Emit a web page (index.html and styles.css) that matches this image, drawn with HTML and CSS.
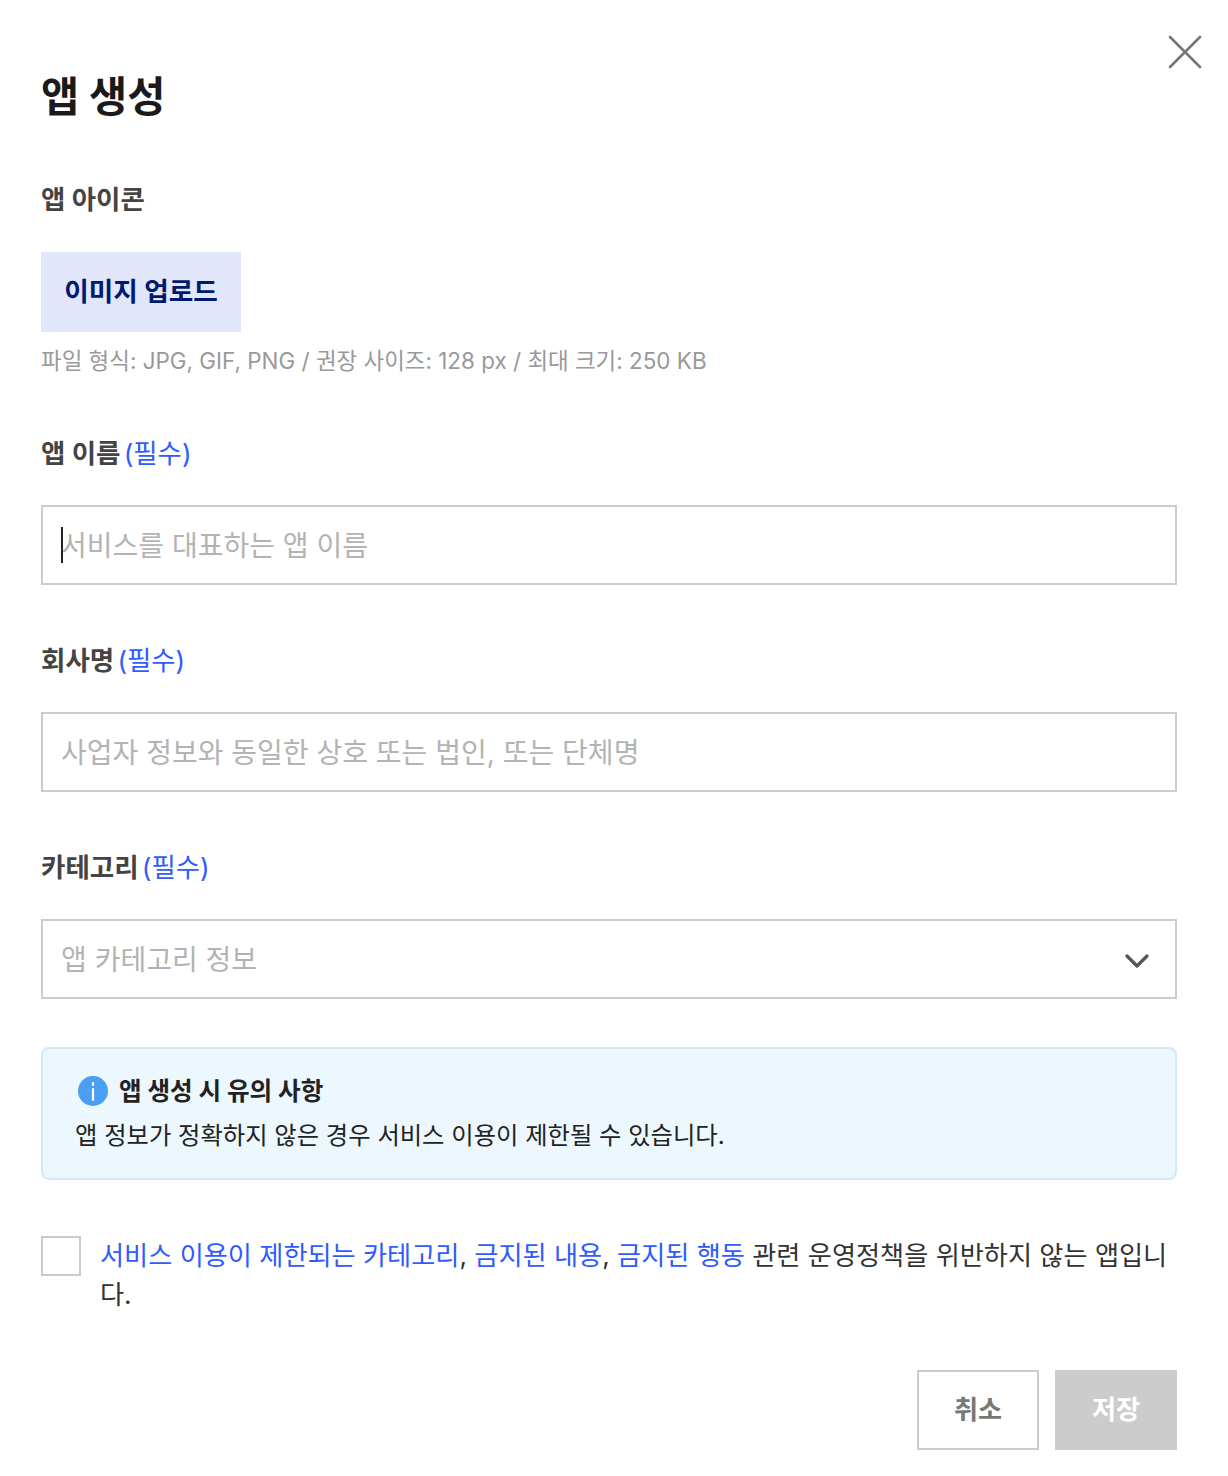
FILE: index.html
```html
<!DOCTYPE html>
<html lang="ko">
<head>
    <meta charset="UTF-8">
    <title>앱 생성</title>
    <link rel="stylesheet" href="styles.css">
</head>
<body>
    <div class="modal">
        <button type="button" class="close-btn" aria-label="닫기">
            <svg width="36" height="36" viewBox="0 0 36 36"><path d="M3 3L33 33M33 3L3 33" stroke="#777" stroke-width="2.6" stroke-linecap="round"/></svg>
        </button>
        <h1>앱 생성</h1>

        <div class="label icon-label">앱 아이콘</div>
        <button type="button" class="upload-btn">이미지 업로드</button>
        <p class="hint">파일 형식: JPG, GIF, PNG / 권장 사이즈: 128 px / 최대 크기: 250 KB</p>

        <div class="form-group">
            <label class="label">앱 이름 <span class="req">(필수)</span></label>
            <div class="field"><span class="caret"></span>서비스를 대표하는 앱 이름</div>
        </div>
        <div class="form-group">
            <label class="label">회사명 <span class="req">(필수)</span></label>
            <div class="field">사업자 정보와 동일한 상호 또는 법인, 또는 단체명</div>
        </div>
        <div class="form-group">
            <label class="label">카테고리 <span class="req">(필수)</span></label>
            <div class="field select">
                앱 카테고리 정보
                <svg width="24" height="14" viewBox="0 0 24 14"><path d="M2 2L12 12L22 2" fill="none" stroke="#555" stroke-width="3.2" stroke-linecap="round" stroke-linejoin="round"/></svg>
            </div>
        </div>

        <div class="notice">
            <div class="notice-title">
                <svg width="30" height="30" viewBox="0 0 30 30"><circle cx="15" cy="15" r="15" fill="#4a9ff5"/><path d="M15 13V24M15 7V9" stroke="#fff" stroke-width="2.2" stroke-linecap="round"/></svg>
                앱 생성 시 유의 사항
            </div>
            <p>앱 정보가 정확하지 않은 경우 서비스 이용이 제한될 수 있습니다.</p>
        </div>

        <div class="agree">
            <span class="checkbox"></span>
            <p><a href="#">서비스 이용이 제한되는 카테고리</a>, <a href="#">금지된 내용</a>, <a href="#">금지된 행동</a> 관련 운영정책을 위반하지 않는 앱입니다.</p>
        </div>

        <div class="actions">
            <button type="button" class="cancel-btn">취소</button>
            <button type="button" class="save-btn">저장</button>
        </div>
    </div>
</body>
</html>
```

FILE: styles.css
```css
* {
    box-sizing: border-box;
}
body {
    margin: 0;
    background: #fff;
    font-family: Inter, "Noto Sans CJK KR", sans-serif;
    color: #222;
}
button {
    font-family: inherit;
    cursor: pointer;
}
.modal {
    position: relative;
    width: 1228px;
    height: 1476px;
    padding: 68px 51px 0 41px;
}
.close-btn {
    position: absolute;
    top: 34px;
    right: 25px;
    padding: 0;
    border: none;
    background: none;
    line-height: 0;
}
h1 {
    margin: 0;
    font-size: 41.5px;
    line-height: 58px;
    font-weight: 700;
    color: #1a1a1a;
}
.label {
    display: block;
    height: 38px;
    font-size: 26.5px;
    line-height: 38px;
    font-weight: 700;
    color: #444;
}
.icon-label {
    margin-top: 54px;
}
.req {
    margin-left: -3px;
    font-size: 26.4px;
    font-weight: 400;
    color: #2f5bff;
}
.upload-btn {
    display: block;
    width: 200px;
    height: 80px;
    margin-top: 34px;
    padding: 0 0 6px;
    border: none;
    background: #e1e6fb;
    color: #001a6e;
    font-size: 26.7px;
    font-weight: 700;
}
.hint {
    margin: 11px 0 0;
    font-size: 22.45px;
    line-height: 35px;
    color: #999;
}
.form-group {
    margin-top: 56px;
}
.field {
    display: flex;
    align-items: center;
    justify-content: space-between;
    position: relative;
    height: 80px;
    margin-top: 33px;
    padding: 0 26px 2px 18px;
    border: 2px solid #ccc;
    font-size: 28px;
    color: #b3b3b3;
}
.caret {
    position: absolute;
    left: 18px;
    top: 20px;
    width: 2px;
    height: 36px;
    background: #222;
}
.select svg {
    margin-top: 6px;
}
.notice {
    height: 133px;
    margin-top: 48px;
    padding: 24px 32px;
    border: 2px solid #d3e8fb;
    border-radius: 8px;
    background: #ecf7fe;
}
.notice-title {
    display: flex;
    align-items: center;
    gap: 11px;
    padding-left: 3px;
    font-size: 24.6px;
    line-height: 36px;
    font-weight: 700;
}
.notice p {
    margin: 7px 0 0;
    font-size: 24.3px;
    line-height: 38px;
}
.agree {
    display: flex;
    gap: 19px;
    margin-top: 56px;
}
.checkbox {
    flex: none;
    width: 40px;
    height: 40px;
    border: 2px solid #ccc;
}
.agree p {
    margin: 0;
    font-size: 26.2px;
    line-height: 39px;
    color: #333;
}
.agree a {
    color: #2f5bff;
    text-decoration: none;
}
.actions {
    display: flex;
    justify-content: flex-end;
    gap: 16px;
    margin-top: 56px;
}
.actions button {
    width: 122px;
    height: 80px;
    padding: 0 0 4px;
    font-size: 26.2px;
    font-weight: 700;
}
.cancel-btn {
    border: 2px solid #ccc;
    background: #fff;
    color: #777;
}
.save-btn {
    border: none;
    background: #ccc;
    color: #fff;
}
```
